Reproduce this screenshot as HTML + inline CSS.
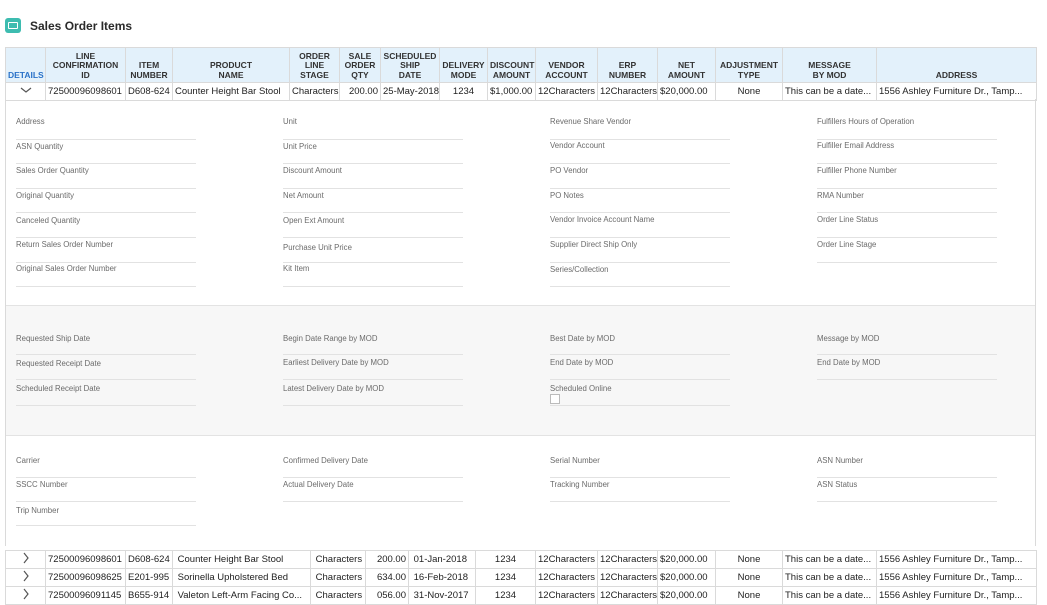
<!DOCTYPE html>
<html><head><meta charset="utf-8"><style>
*{margin:0;padding:0;box-sizing:border-box}
body{width:1047px;height:601px;overflow:hidden;background:#fff;font-family:"Liberation Sans",sans-serif;position:relative;color:#222}
.a{position:absolute}
.ic{left:5px;top:18px;width:16px;height:15px;background:#3dbcb0;border-radius:3px}
.ic:after{content:"";position:absolute;left:3px;top:4px;width:8px;height:5px;border:1.5px solid #fff;border-radius:1px}
.title{left:30px;top:19px;font-size:12px;font-weight:bold;color:#2b2b2b}
table{position:absolute;left:5px;border-collapse:collapse;table-layout:fixed}
td,th{border:1px solid #dadada;font-size:9.5px;white-space:nowrap;overflow:hidden;padding:0 2px;height:18px}
th{background:#e3f1fb;font-size:8.5px;line-height:9.5px;font-weight:bold;color:#333;vertical-align:bottom;padding-bottom:2px;text-align:center;height:35px}
.c{text-align:center}
.r{text-align:right}
.panel{left:5px;top:99px;width:1031px;height:447px;border-left:1px solid #dadada;border-right:1px solid #dadada}
.grey{left:6px;top:305px;width:1029px;height:131px;background:#f7f7f7;border-top:1px solid #e3e3e3;border-bottom:1px solid #e3e3e3}
.l{font-size:7.8px;color:#6b6b6b;white-space:nowrap}
.u{height:1px;width:180px;background:#e2e2e2}
</style></head><body>
<div class="a ic"></div>
<div class="a title">Sales Order Items</div>

<div class="a panel"></div>
<div class="a grey"></div>

<table style="top:47px;width:1031px">
<colgroup><col style="width:40px"><col style="width:80px"><col style="width:47px"><col style="width:117px"><col style="width:50px"><col style="width:41px"><col style="width:59px"><col style="width:48px"><col style="width:48px"><col style="width:62px"><col style="width:60px"><col style="width:58px"><col style="width:67px"><col style="width:94px"><col style="width:160px"></colgroup>
<tr><th style="color:#2a72c8">DETAILS</th><th>LINE<br>CONFIRMATION<br>ID</th><th>ITEM<br>NUMBER</th><th>PRODUCT<br>NAME</th><th>ORDER<br>LINE<br>STAGE</th><th>SALE<br>ORDER<br>QTY</th><th>SCHEDULED<br>SHIP<br>DATE</th><th>DELIVERY<br>MODE</th><th>DISCOUNT<br>AMOUNT</th><th>VENDOR<br>ACCOUNT</th><th>ERP<br>NUMBER</th><th>NET<br>AMOUNT</th><th>ADJUSTMENT<br>TYPE</th><th>MESSAGE<br>BY MOD</th><th>ADDRESS</th></tr>
<tr><td class="c"><svg width="12" height="8"><path d="M1 2l5 4 5-4" fill="none" stroke="#555" stroke-width="1.2"/></svg></td><td>72500096098601</td><td>D608-624</td><td>Counter Height Bar Stool</td><td>Characters</td><td class="r">200.00</td><td>25-May-2018</td><td class="c">1234</td><td>$1,000.00</td><td>12Characters</td><td>12Characters</td><td>$20,000.00</td><td class="c">None</td><td>This can be a date...</td><td>1556 Ashley Furniture Dr., Tamp...</td></tr>
</table>

<div class="a l" style="left:16px;top:117px">Address</div><div class="a u" style="left:16px;top:139px"></div>
<div class="a l" style="left:16px;top:142px">ASN Quantity</div><div class="a u" style="left:16px;top:163px"></div>
<div class="a l" style="left:16px;top:166px">Sales Order Quantity</div><div class="a u" style="left:16px;top:188px"></div>
<div class="a l" style="left:16px;top:191px">Original Quantity</div><div class="a u" style="left:16px;top:212px"></div>
<div class="a l" style="left:16px;top:216px">Canceled Quantity</div><div class="a u" style="left:16px;top:237px"></div>
<div class="a l" style="left:16px;top:240px">Return Sales Order Number</div><div class="a u" style="left:16px;top:262px"></div>
<div class="a l" style="left:16px;top:264px">Original Sales Order Number</div><div class="a u" style="left:16px;top:286px"></div>

<div class="a l" style="left:283px;top:117px">Unit</div><div class="a u" style="left:283px;top:139px"></div>
<div class="a l" style="left:283px;top:142px">Unit Price</div><div class="a u" style="left:283px;top:163px"></div>
<div class="a l" style="left:283px;top:166px">Discount Amount</div><div class="a u" style="left:283px;top:188px"></div>
<div class="a l" style="left:283px;top:191px">Net Amount</div><div class="a u" style="left:283px;top:212px"></div>
<div class="a l" style="left:283px;top:216px">Open Ext Amount</div><div class="a u" style="left:283px;top:237px"></div>
<div class="a l" style="left:283px;top:243px">Purchase Unit Price</div><div class="a u" style="left:283px;top:262px"></div>
<div class="a l" style="left:283px;top:264px">Kit Item</div><div class="a u" style="left:283px;top:286px"></div>

<div class="a l" style="left:550px;top:117px">Revenue Share Vendor</div><div class="a u" style="left:550px;top:139px"></div>
<div class="a l" style="left:550px;top:141px">Vendor Account</div><div class="a u" style="left:550px;top:163px"></div>
<div class="a l" style="left:550px;top:166px">PO Vendor</div><div class="a u" style="left:550px;top:188px"></div>
<div class="a l" style="left:550px;top:191px">PO Notes</div><div class="a u" style="left:550px;top:212px"></div>
<div class="a l" style="left:550px;top:215px">Vendor Invoice Account Name</div><div class="a u" style="left:550px;top:237px"></div>
<div class="a l" style="left:550px;top:240px">Supplier Direct Ship Only</div><div class="a u" style="left:550px;top:262px"></div>
<div class="a l" style="left:550px;top:265px">Series/Collection</div><div class="a u" style="left:550px;top:286px"></div>

<div class="a l" style="left:817px;top:117px">Fulfillers Hours of Operation</div><div class="a u" style="left:817px;top:139px"></div>
<div class="a l" style="left:817px;top:141px">Fulfiller Email Address</div><div class="a u" style="left:817px;top:163px"></div>
<div class="a l" style="left:817px;top:166px">Fulfiller Phone Number</div><div class="a u" style="left:817px;top:188px"></div>
<div class="a l" style="left:817px;top:191px">RMA Number</div><div class="a u" style="left:817px;top:212px"></div>
<div class="a l" style="left:817px;top:215px">Order Line Status</div><div class="a u" style="left:817px;top:237px"></div>
<div class="a l" style="left:817px;top:240px">Order Line Stage</div><div class="a u" style="left:817px;top:262px"></div>

<div class="a l" style="left:16px;top:334px">Requested Ship Date</div><div class="a u" style="left:16px;top:354px"></div>
<div class="a l" style="left:16px;top:359px">Requested Receipt Date</div><div class="a u" style="left:16px;top:379px"></div>
<div class="a l" style="left:16px;top:384px">Scheduled Receipt Date</div><div class="a u" style="left:16px;top:405px"></div>
<div class="a l" style="left:283px;top:334px">Begin Date Range by MOD</div><div class="a u" style="left:283px;top:354px"></div>
<div class="a l" style="left:283px;top:358px">Earliest Delivery Date by MOD</div><div class="a u" style="left:283px;top:379px"></div>
<div class="a l" style="left:283px;top:384px">Latest Delivery Date by MOD</div><div class="a u" style="left:283px;top:405px"></div>
<div class="a l" style="left:550px;top:334px">Best Date by MOD</div><div class="a u" style="left:550px;top:354px"></div>
<div class="a l" style="left:550px;top:358px">End Date by MOD</div><div class="a u" style="left:550px;top:379px"></div>
<div class="a l" style="left:550px;top:384px">Scheduled Online</div><div class="a u" style="left:550px;top:405px"></div>
<div class="a" style="left:550px;top:394px;width:10px;height:10px;border:1px solid #bbb;background:#fff"></div>
<div class="a l" style="left:817px;top:334px">Message by MOD</div><div class="a u" style="left:817px;top:354px"></div>
<div class="a l" style="left:817px;top:358px">End Date by MOD</div><div class="a u" style="left:817px;top:379px"></div>

<div class="a l" style="left:16px;top:456px">Carrier</div><div class="a u" style="left:16px;top:477px"></div>
<div class="a l" style="left:16px;top:480px">SSCC Number</div><div class="a u" style="left:16px;top:501px"></div>
<div class="a l" style="left:16px;top:506px">Trip Number</div><div class="a u" style="left:16px;top:525px"></div>
<div class="a l" style="left:283px;top:456px">Confirmed Delivery Date</div><div class="a u" style="left:283px;top:477px"></div>
<div class="a l" style="left:283px;top:480px">Actual Delivery Date</div><div class="a u" style="left:283px;top:501px"></div>
<div class="a l" style="left:550px;top:456px">Serial Number</div><div class="a u" style="left:550px;top:477px"></div>
<div class="a l" style="left:550px;top:480px">Tracking Number</div><div class="a u" style="left:550px;top:501px"></div>
<div class="a l" style="left:817px;top:456px">ASN Number</div><div class="a u" style="left:817px;top:477px"></div>
<div class="a l" style="left:817px;top:480px">ASN Status</div><div class="a u" style="left:817px;top:501px"></div>

<table style="top:550px;width:1031px">
<colgroup><col style="width:40px"><col style="width:80px"><col style="width:47px"><col style="width:138px"><col style="width:55px"><col style="width:43px"><col style="width:67px"><col style="width:60px"><col style="width:62px"><col style="width:60px"><col style="width:58px"><col style="width:67px"><col style="width:94px"><col style="width:160px"></colgroup>
<tr><td class="c"><svg width="8" height="12"><path d="M2 1l4 5-4 5" fill="none" stroke="#555" stroke-width="1.2"/></svg></td><td>72500096098601</td><td>D608-624</td><td>&nbsp;Counter Height Bar Stool</td><td>&nbsp;Characters</td><td class="r">200.00</td><td>&nbsp;01-Jan-2018</td><td class="c">1234</td><td>12Characters</td><td>12Characters</td><td>$20,000.00</td><td class="c">None</td><td>This can be a date...</td><td>1556 Ashley Furniture Dr., Tamp...</td></tr>
<tr><td class="c"><svg width="8" height="12"><path d="M2 1l4 5-4 5" fill="none" stroke="#555" stroke-width="1.2"/></svg></td><td>72500096098625</td><td>E201-995</td><td>&nbsp;Sorinella Upholstered Bed</td><td>&nbsp;Characters</td><td class="r">634.00</td><td>&nbsp;16-Feb-2018</td><td class="c">1234</td><td>12Characters</td><td>12Characters</td><td>$20,000.00</td><td class="c">None</td><td>This can be a date...</td><td>1556 Ashley Furniture Dr., Tamp...</td></tr>
<tr><td class="c"><svg width="8" height="12"><path d="M2 1l4 5-4 5" fill="none" stroke="#555" stroke-width="1.2"/></svg></td><td>72500096091145</td><td>B655-914</td><td>&nbsp;Valeton Left-Arm Facing Co...</td><td>&nbsp;Characters</td><td class="r">056.00</td><td>&nbsp;31-Nov-2017</td><td class="c">1234</td><td>12Characters</td><td>12Characters</td><td>$20,000.00</td><td class="c">None</td><td>This can be a date...</td><td>1556 Ashley Furniture Dr., Tamp...</td></tr>
</table>
</body></html>
